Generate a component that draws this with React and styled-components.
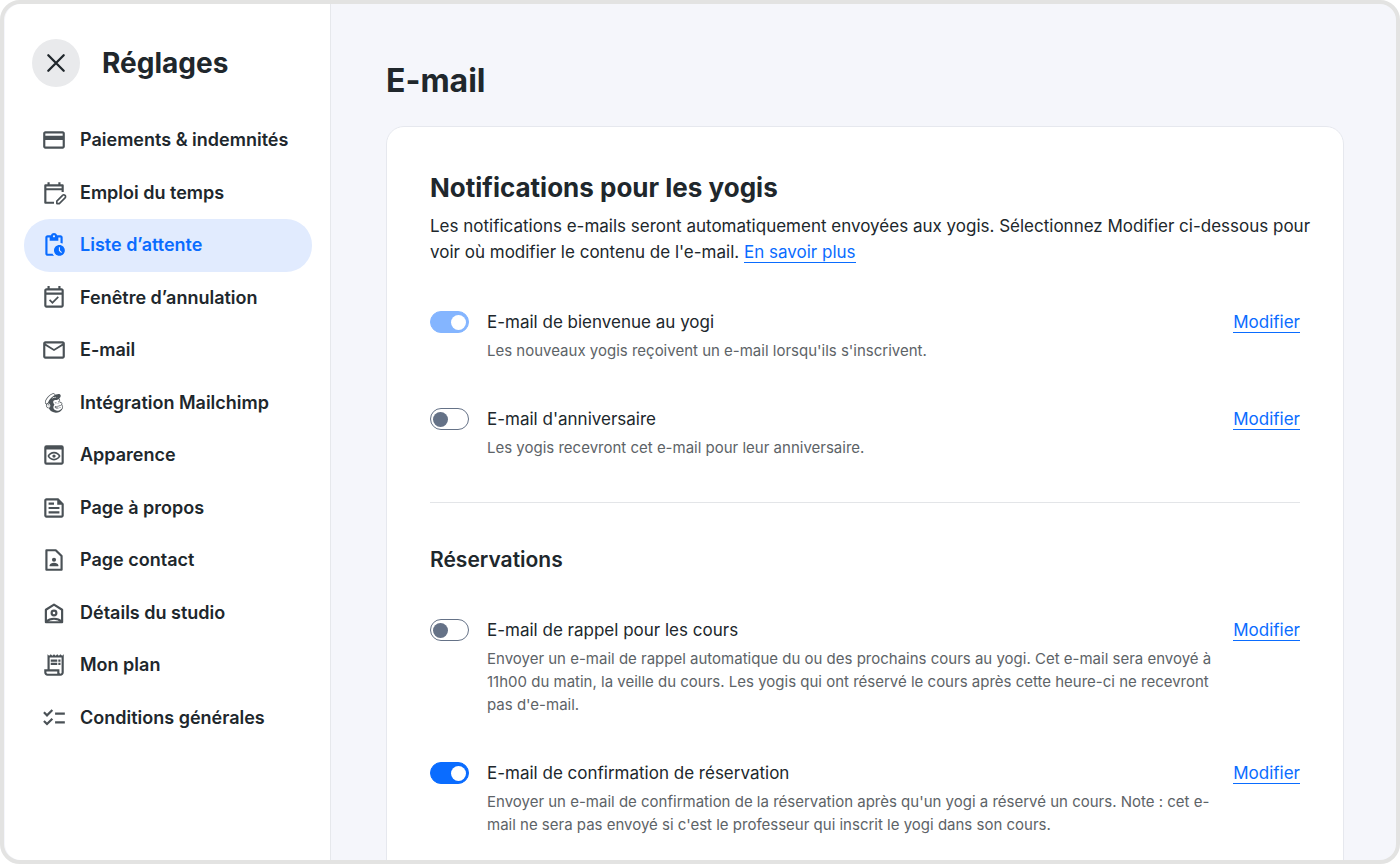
import React, { useState } from 'react';
import styled, { createGlobalStyle } from 'styled-components';
import {
  MdOutlineCreditCard,
  MdPendingActions,
  MdOutlineEventAvailable,
  MdMailOutline,
  MdOutlinePreview,
  MdOutlineFeed,
  MdOutlineReceiptLong,
  MdOutlineChecklist,
} from 'react-icons/md';
import { FaMailchimp } from 'react-icons/fa';

const GlobalStyle = createGlobalStyle`
  * {
    box-sizing: border-box;
  }

  body {
    margin: 0;
    background: #fff;
    color: #20272c;
    font-family: Inter, "Liberation Sans", sans-serif;
    -webkit-font-smoothing: antialiased;
  }
`;

const Shell = styled.div`
  display: flex;
  height: 100vh;
  padding-left: 1px;
  overflow: hidden;
  border: 4px solid #e3e3e2;
  border-radius: 20px;
  background: #f5f6fb;
`;

const Sidebar = styled.aside`
  flex: 0 0 326px;
  padding: 35px 18px 0 19px;
  border-right: 1px solid #e6e8ec;
  border-radius: 16px 0 0 16px;
  background: #fff;
`;

const SidebarHeader = styled.div`
  display: flex;
  align-items: center;
  gap: 22px;
  padding-left: 8px;
  margin-bottom: 27px;
`;

const CloseButton = styled.button`
  display: flex;
  align-items: center;
  justify-content: center;
  width: 48px;
  height: 48px;
  padding: 0;
  border: none;
  border-radius: 50%;
  background: #e9eaec;
  color: #20272c;
  cursor: pointer;
`;

const SidebarTitle = styled.h2`
  margin: 0;
  font-size: 28px;
  line-height: 36px;
  font-weight: 700;
`;

const Nav = styled.nav`
  display: grid;
  grid-auto-rows: 1fr;
  min-height: 630px;
`;

const NavItem = styled.a`
  display: flex;
  align-items: center;
  gap: 13px;
  padding: 0 17px;
  border-radius: 26px;
  background: ${({ $active }) => ($active ? '#e1ebfe' : 'transparent')};
  color: ${({ $active }) => ($active ? '#0a6cff' : '#20272c')};
  font-size: 18px;
  line-height: 26px;
  font-weight: 600;
  text-decoration: none;
  white-space: nowrap;

  svg {
    flex: none;
    width: 26px;
    height: 26px;
    color: ${({ $active }) => ($active ? '#0a6cff' : '#4a5156')};
  }

  .small {
    padding: 2px;
  }
`;

const Main = styled.main`
  flex: 1;
  min-width: 0;
  padding: 55px 52px 0 55px;
`;

const PageTitle = styled.h1`
  margin: 0 0 23px;
  font-size: 32px;
  line-height: 44px;
  font-weight: 700;
`;

const Card = styled.section`
  padding: 43px;
  border: 1px solid #e6e8ee;
  border-radius: 18px;
  background: #fff;
`;

const CardTitle = styled.h2`
  margin: 0 0 7px;
  font-size: 26px;
  line-height: 36px;
  font-weight: 700;
`;

const Intro = styled.p`
  margin: 0 -16px 44px 0;
  font-size: 17px;
  line-height: 26px;
`;

const Link = styled.a`
  border-bottom: 1px solid #0a6cff;
  color: #0a6cff;
  font-size: 17px;
  line-height: 20px;
  text-decoration: none;
`;

const Divider = styled.hr`
  height: 1px;
  margin: 43px 0;
  border: none;
  background: #e3e5e8;
`;

const GroupTitle = styled.h3`
  margin: 0 0 43px;
  font-size: 21px;
  line-height: 28px;
  font-weight: 600;
`;

const Settings = styled.div`
  display: flex;
  flex-direction: column;
  gap: 44px;
`;

const Row = styled.div`
  display: flex;
  align-items: flex-start;
`;

const Toggle = styled.input`
  appearance: none;
  flex: none;
  display: flex;
  align-items: center;
  width: 39px;
  height: 22px;
  margin: 2px 18px 0 0;
  padding: 0 2px;
  border: 1px solid #657287;
  border-radius: 11px;
  background: #fff;
  cursor: pointer;

  &::before {
    content: '';
    width: 15px;
    height: 15px;
    border-radius: 50%;
    background: #657287;
  }

  &:checked {
    justify-content: flex-end;
    border-color: #0a6cff;
    background: #0a6cff;
  }

  &:checked::before {
    background: #fff;
  }

  &:disabled {
    border-color: #84b5ff;
    background: #84b5ff;
    cursor: default;
  }
`;

const RowText = styled.div`
  flex: 1;
  min-width: 0;
  margin-right: 16px;
`;

const RowLabel = styled.label`
  display: block;
  margin-bottom: 4px;
  font-size: 17px;
  line-height: 26px;
`;

const RowDescription = styled.p`
  margin: 0;
  color: #5d6367;
  font-size: 15px;
  line-height: 23px;
`;

const RowAction = styled.div`
  line-height: 26px;
`;

const CloseIcon = () => (
  <svg width="20" height="20" viewBox="0 0 20 20" fill="none" stroke="currentColor" strokeWidth="2.3" strokeLinecap="round">
    <path d="M2.3 2.3l15.4 15.4M17.7 2.3L2.3 17.7" />
  </svg>
);

const ScheduleIcon = () => (
  <svg viewBox="0 0 24 24" fill="none" stroke="currentColor" strokeWidth="2" strokeLinejoin="round">
    <path d="M12 21H4V5h16v6" />
    <path d="M4 8.500h16M7 2v3M17 2v3" />
    <path d="M14.600 21.800v-2.300l5.300-5.300a1.600 1.600 0 0 1 2.300 2.300l-5.300 5.300z" strokeWidth="1.500" />
  </svg>
);

const ContactPageIcon = () => (
  <svg viewBox="0 0 24 24" fill="none" stroke="currentColor" strokeWidth="2" strokeLinejoin="round">
    <path d="M5 3h8.600L19 8.400V21H5z" />
    <circle cx="12" cy="11.800" r="1.900" fill="currentColor" stroke="none" />
    <path d="M8 17.800v-.9c0-1.400 2-2.300 4-2.300s4 .9 4 2.300v.9z" fill="currentColor" stroke="none" />
  </svg>
);

const StudioIcon = () => (
  <svg viewBox="0 0 24 24" fill="none" stroke="currentColor" strokeWidth="2" strokeLinejoin="round">
    <path d="M4.500 9L12 4.200 19.500 9v11.500h-15z" />
    <circle cx="12" cy="12" r="2.200" />
    <path d="M5 20c1.800-1.900 4.200-2.700 7-2.700s5.200.8 7 2.700" />
  </svg>
);

const navItems = [
  { label: 'Paiements & indemnités', icon: <MdOutlineCreditCard /> },
  { label: 'Emploi du temps', icon: <ScheduleIcon /> },
  { label: 'Liste d’attente', icon: <MdPendingActions />, active: true },
  { label: 'Fenêtre d’annulation', icon: <MdOutlineEventAvailable /> },
  { label: 'E-mail', icon: <MdMailOutline /> },
  { label: 'Intégration Mailchimp', icon: <FaMailchimp className="small" /> },
  { label: 'Apparence', icon: <MdOutlinePreview /> },
  { label: 'Page à propos', icon: <MdOutlineFeed /> },
  { label: 'Page contact', icon: <ContactPageIcon /> },
  { label: 'Détails du studio', icon: <StudioIcon /> },
  { label: 'Mon plan', icon: <MdOutlineReceiptLong /> },
  { label: 'Conditions générales', icon: <MdOutlineChecklist /> },
];

const generalSettings = [
  {
    id: 'welcome',
    label: 'E-mail de bienvenue au yogi',
    description: "Les nouveaux yogis reçoivent un e-mail lorsqu'ils s'inscrivent.",
    on: true,
    disabled: true,
  },
  {
    id: 'birthday',
    label: "E-mail d'anniversaire",
    description: 'Les yogis recevront cet e-mail pour leur anniversaire.',
  },
];

const bookingSettings = [
  {
    id: 'reminder',
    label: 'E-mail de rappel pour les cours',
    description:
      "Envoyer un e-mail de rappel automatique du ou des prochains cours au yogi. Cet e-mail sera envoyé à 11h00 du matin, la veille du cours. Les yogis qui ont réservé le cours après cette heure-ci ne recevront pas d'e-mail.",
  },
  {
    id: 'confirmation',
    label: 'E-mail de confirmation de réservation',
    description:
      "Envoyer un e-mail de confirmation de la réservation après qu'un yogi a réservé un cours. Note : cet e-mail ne sera pas envoyé si c'est le professeur qui inscrit le yogi dans son cours.",
    on: true,
  },
];

const SettingRow = ({ id, label, description, on = false, disabled }) => {
  const [checked, setChecked] = useState(on);

  return (
    <Row>
      <Toggle
        type="checkbox"
        id={id}
        checked={checked}
        disabled={disabled}
        onChange={(e) => setChecked(e.target.checked)}
      />
      <RowText>
        <RowLabel htmlFor={id}>{label}</RowLabel>
        <RowDescription>{description}</RowDescription>
      </RowText>
      <RowAction>
        <Link href="#">Modifier</Link>
      </RowAction>
    </Row>
  );
};

const App = () => {
  return (
    <>
      <GlobalStyle />
      <Shell>
        <Sidebar>
          <SidebarHeader>
            <CloseButton aria-label="Fermer">
              <CloseIcon />
            </CloseButton>
            <SidebarTitle>Réglages</SidebarTitle>
          </SidebarHeader>
          <Nav>
            {navItems.map(({ label, icon, active }) => (
              <NavItem key={label} href="#" $active={active}>
                {icon}
                {label}
              </NavItem>
            ))}
          </Nav>
        </Sidebar>
        <Main>
          <PageTitle>E-mail</PageTitle>
          <Card>
            <CardTitle>Notifications pour les yogis</CardTitle>
            <Intro>
              Les notifications e-mails seront automatiquement envoyées aux yogis. Sélectionnez Modifier
              ci-dessous pour voir où modifier le contenu de l'e-mail. <Link href="#">En savoir plus</Link>
            </Intro>
            <Settings>
              {generalSettings.map((item) => (
                <SettingRow key={item.id} {...item} />
              ))}
            </Settings>
            <Divider />
            <GroupTitle>Réservations</GroupTitle>
            <Settings>
              {bookingSettings.map((item) => (
                <SettingRow key={item.id} {...item} />
              ))}
            </Settings>
          </Card>
        </Main>
      </Shell>
    </>
  );
};

export default App;
